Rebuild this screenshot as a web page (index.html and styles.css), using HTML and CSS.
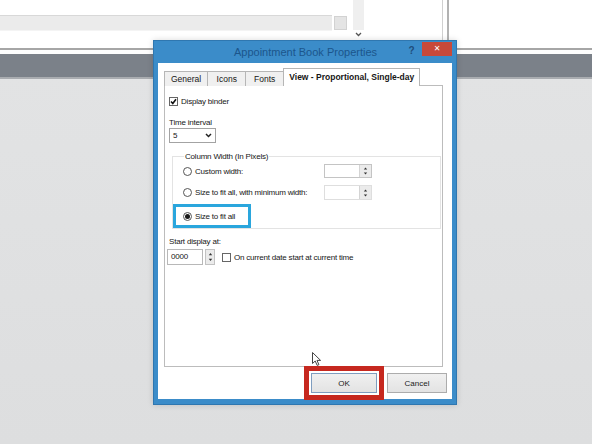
FILE: index.html
```html
<!DOCTYPE html>
<html lang="en">
<head>
    <meta charset="UTF-8">
    <meta name="viewport" content="width=device-width, initial-scale=1.0">
    <title>Appointment Book Properties</title>
    <link rel="stylesheet" href="styles.css">
</head>
<body>
    <!-- application behind the dialog -->
    <div class="desktop">
        <div class="top-strip">
            <div class="field"></div>
            <div class="field-btn"></div>
            <div class="scroll">
                <div class="scroll-track"></div>
                <svg class="scroll-chev" width="7" height="5" viewBox="0 0 7 5">
                    <path d="M1 1 L3.5 3.5 L6 1" fill="none" stroke="#555" stroke-width="1.3"/>
                </svg>
            </div>
            <div class="vline light"></div>
            <div class="vline dark"></div>
        </div>
        <div class="hrule"></div>
        <div class="gap"></div>
        <div class="band"></div>
        <div class="band-edge"></div>
    </div>

    <div class="dialog">
        <div class="titlebar">
            <span class="title">Appointment Book Properties</span>
            <span class="help">?</span>
            <span class="close">&#x2715;</span>
        </div>

        <div class="dialog-body">
            <div class="tabs">
                <div class="tab">General</div>
                <div class="tab">Icons</div>
                <div class="tab">Fonts</div>
                <div class="tab active">View - Proportional, Single-day</div>
            </div>

            <div class="panel">
                <div class="check-row">
                    <span class="checkbox checked">
                        <svg width="7" height="7" viewBox="0 0 7 7"><path d="M1 3.5 L2.8 5.5 L6 1.2" fill="none" stroke="#111" stroke-width="1.6"/></svg>
                    </span>
                    <span>Display binder</span>
                </div>

                <div class="label interval-label">Time interval</div>
                <div class="dropdown">
                    <span>5</span>
                    <svg width="7" height="5" viewBox="0 0 7 5"><path d="M1 1 L3.5 3.5 L6 1" fill="none" stroke="#222" stroke-width="1.5"/></svg>
                </div>

                <fieldset class="group">
                    <legend>Column Width (In Pixels)</legend>
                    <div class="radio-row first">
                        <span class="option"><span class="radio"></span>Custom width:</span>
                        <span class="spin">
                            <span class="spin-value"></span>
                            <span class="spin-btns">
                                <svg width="5" height="10" viewBox="0 0 5 10"><path d="M2.5 1.5 L4.2 3.6 L0.8 3.6 Z M2.5 8.5 L4.2 6.4 L0.8 6.4 Z" fill="#333"/></svg>
                            </span>
                        </span>
                    </div>
                    <div class="radio-row second">
                        <span class="option"><span class="radio"></span>Size to fit all, with minimum width:</span>
                        <span class="spin tall">
                            <span class="spin-value"></span>
                            <span class="spin-btns">
                                <svg width="5" height="10" viewBox="0 0 5 10"><path d="M2.5 1.5 L4.2 3.6 L0.8 3.6 Z M2.5 8.5 L4.2 6.4 L0.8 6.4 Z" fill="#333"/></svg>
                            </span>
                        </span>
                    </div>
                    <div class="callout blue">
                        <span class="radio selected"></span>Size to fit all
                    </div>
                </fieldset>

                <div class="label start-label">Start display at:</div>
                <div class="start-row">
                    <span class="textbox">0000</span>
                    <span class="spin-btns loose">
                        <svg width="5" height="12" viewBox="0 0 5 12"><path d="M2.5 2 L4.2 4.2 L0.8 4.2 Z M2.5 10 L4.2 7.8 L0.8 7.8 Z" fill="#333"/></svg>
                    </span>
                    <span class="checkbox"></span>
                    <span>On current date start at current time</span>
                </div>
            </div>

            <div class="footer">
                <div class="callout red">
                    <button class="btn default">OK</button>
                </div>
                <button class="btn">Cancel</button>
            </div>
        </div>
    </div>

    <!-- mouse pointer -->
    <svg class="pointer" width="10" height="15" viewBox="0 0 10 15">
        <path d="M0.5 0.5 L0.5 11.5 L3.2 9 L5.2 13.4 L6.9 12.7 L5 8.4 L8.6 8.4 Z" fill="#fff" stroke="#444" stroke-width="1"/>
    </svg>
</body>
</html>
```

FILE: styles.css
```css
* {
    margin: 0;
    padding: 0;
    box-sizing: border-box;
}

body {
    width: 592px;
    height: 444px;
    overflow: hidden;
    background: linear-gradient(#e3e4e5, #dddedf);
    font-family: "Liberation Sans", Arial, sans-serif;
    font-size: 8px;
    letter-spacing: -0.2px;
    color: #161616;
    white-space: nowrap;
}

/* background window */
.top-strip {
    display: flex;
    align-items: flex-start;
    height: 48px;
    background: #fff;
}

.field {
    width: 332px;
    height: 16px;
    margin-top: 15px;
    background: #ebebeb;
    border-top: 1px solid #d8d8d8;
    border-bottom: 1px solid #f4f4f4;
}

.field-btn {
    width: 13px;
    height: 14px;
    margin: 16px 0 0 2px;
    background: #e4e4e4;
    border: 1px solid #d2d2d2;
}

.scroll {
    display: flex;
    flex-direction: column;
    align-items: center;
    width: 11px;
    margin-left: 6px;
}

.scroll-track {
    width: 11px;
    height: 30px;
    background: #efefef;
}

.scroll-chev {
    margin-top: 2px;
}

.vline {
    height: 48px;
}

.vline.light {
    width: 1px;
    margin-left: 78px;
    background: #d0d0d0;
}

.vline.dark {
    width: 2px;
    margin-left: 4px;
    background: #b2b2b2;
}

.hrule {
    height: 2px;
    background: #a6a6a6;
}

.gap {
    height: 4px;
    background: #fdfdfd;
}

.band {
    height: 23px;
    background: #7b8189;
}

.band-edge {
    height: 2px;
    background: #a9acb0;
}

/* dialog window */
.dialog {
    position: absolute;
    left: 153px;
    top: 40px;
    width: 304px;
    height: 365px;
    display: flex;
    flex-direction: column;
    background: #3b8cc9;
    border: 1px solid #2f77b0;
    padding: 0 4px 5px 4px;
    box-shadow: 0 0 6px rgba(0, 0, 0, 0.15);
}

.titlebar {
    display: flex;
    align-items: flex-start;
    height: 22px;
    letter-spacing: 0;
}

.title {
    flex: 1;
    padding-left: 52px;
    text-align: center;
    font-size: 11px;
    line-height: 22px;
    color: #1b568c;
}

.help {
    width: 21px;
    text-align: center;
    font-weight: bold;
    font-size: 10px;
    line-height: 20px;
    color: #1f4c7b;
}

.close {
    width: 30px;
    height: 14px;
    margin-top: 1px;
    background: #c8493a;
    color: #fff;
    text-align: center;
    font-family: "DejaVu Sans", sans-serif;
    font-weight: bold;
    font-size: 8px;
    line-height: 14px;
}

.dialog-body {
    flex: 1;
    background: #fff;
    padding: 5px 0 0 6px;
}

/* tabs */
.tabs {
    display: flex;
    align-items: flex-end;
    height: 18px;
    margin-bottom: -1px;
}

.tab {
    min-width: 39px;
    height: 15px;
    padding: 0 6px;
    margin-right: -1px;
    background: #f0f0f0;
    border: 1px solid #b6b6b6;
    border-bottom: none;
    text-align: center;
    font-size: 8.5px;
    letter-spacing: 0;
    line-height: 14px;
}

.tab.active {
    position: relative;
    z-index: 1;
    height: 18px;
    padding: 0 5px;
    background: #fff;
    font-weight: bold;
    line-height: 16px;
}

.panel {
    width: 279px;
    height: 282px;
    border: 1px solid #bcbcbc;
    padding: 7px 0 0 4px;
}

.check-row {
    display: flex;
    align-items: center;
    height: 16px;
}

.checkbox {
    display: inline-flex;
    align-items: center;
    justify-content: center;
    width: 9px;
    height: 9px;
    margin-right: 3px;
    border: 1px solid #666;
    background: #fff;
}

.label {
    line-height: 10px;
}

.interval-label {
    margin-top: 9px;
}

.dropdown {
    display: flex;
    align-items: center;
    justify-content: space-between;
    width: 47px;
    height: 15px;
    padding: 0 3px 0 3px;
    border: 1px solid #a3a3a3;
}

/* column width group */
.group {
    width: 269px;
    height: 78px;
    margin: 8px 0 0 3px;
    padding: 0 0 0 10px;
    border: 1px solid #e3e3e3;
}

.group legend {
    margin-left: 1px;
    padding: 0 1px;
    line-height: 11px;
}

.radio-row {
    display: flex;
    align-items: center;
}

.radio-row.first {
    margin-top: 2px;
    height: 14px;
}

.radio-row.second {
    margin-top: 7px;
    height: 15px;
}

.option {
    display: flex;
    align-items: center;
    width: 141px;
}

.radio {
    display: inline-flex;
    align-items: center;
    justify-content: center;
    width: 9px;
    height: 9px;
    margin-right: 3px;
    border: 1px solid #555;
    border-radius: 50%;
    background: #fff;
}

.radio.selected::after {
    content: "";
    width: 5px;
    height: 5px;
    border-radius: 50%;
    background: #1a1a1a;
}

.spin {
    display: flex;
    width: 48px;
    height: 14px;
    border: 1px solid #c4c4c4;
}

.spin.tall {
    height: 15px;
    border-color: #dedede;
}

.spin-value {
    flex: 1;
    background: #fff;
}

.spin-btns {
    display: flex;
    align-items: center;
    justify-content: center;
    width: 12px;
    background: #ebebeb;
    border-left: 1px solid #d4d4d4;
}

.spin-btns.loose {
    width: 10px;
    height: 16px;
    margin-left: 2px;
    border: 1px solid #c2c2c2;
}

/* highlight frames drawn over controls */
.callout {
    display: flex;
    align-items: center;
}

.callout.blue {
    width: 78px;
    height: 24px;
    margin: 4px 0 0 -10px;
    padding-left: 7px;
    border: 3px solid #2aa6dd;
}

.callout.red {
    margin: -7px;
    padding: 2px;
    border: 5px solid #c6281f;
}

.start-label {
    margin-top: 8px;
}

.start-row {
    display: flex;
    align-items: center;
    height: 16px;
    margin: 2px 0 0 -2px;
}

.textbox {
    width: 36px;
    height: 16px;
    padding-left: 3px;
    border: 1px solid #b8b8b8;
    line-height: 14px;
}

.start-row .checkbox {
    margin-left: 7px;
}

/* footer buttons */
.footer {
    display: flex;
    justify-content: flex-end;
    gap: 10px;
    padding: 6px 5px 0 0;
}

.btn {
    display: block;
    width: 60px;
    height: 20px;
    background: linear-gradient(#f0f0f0, #e3e3e3);
    border: 1px solid #acacac;
    font-family: "Liberation Sans", Arial, sans-serif;
    font-size: 8px;
    color: #1b1b1b;
}

.btn.default {
    width: 66px;
    border-color: #7f9dbf;
}

.pointer {
    position: absolute;
    left: 312px;
    top: 352px;
}
```
